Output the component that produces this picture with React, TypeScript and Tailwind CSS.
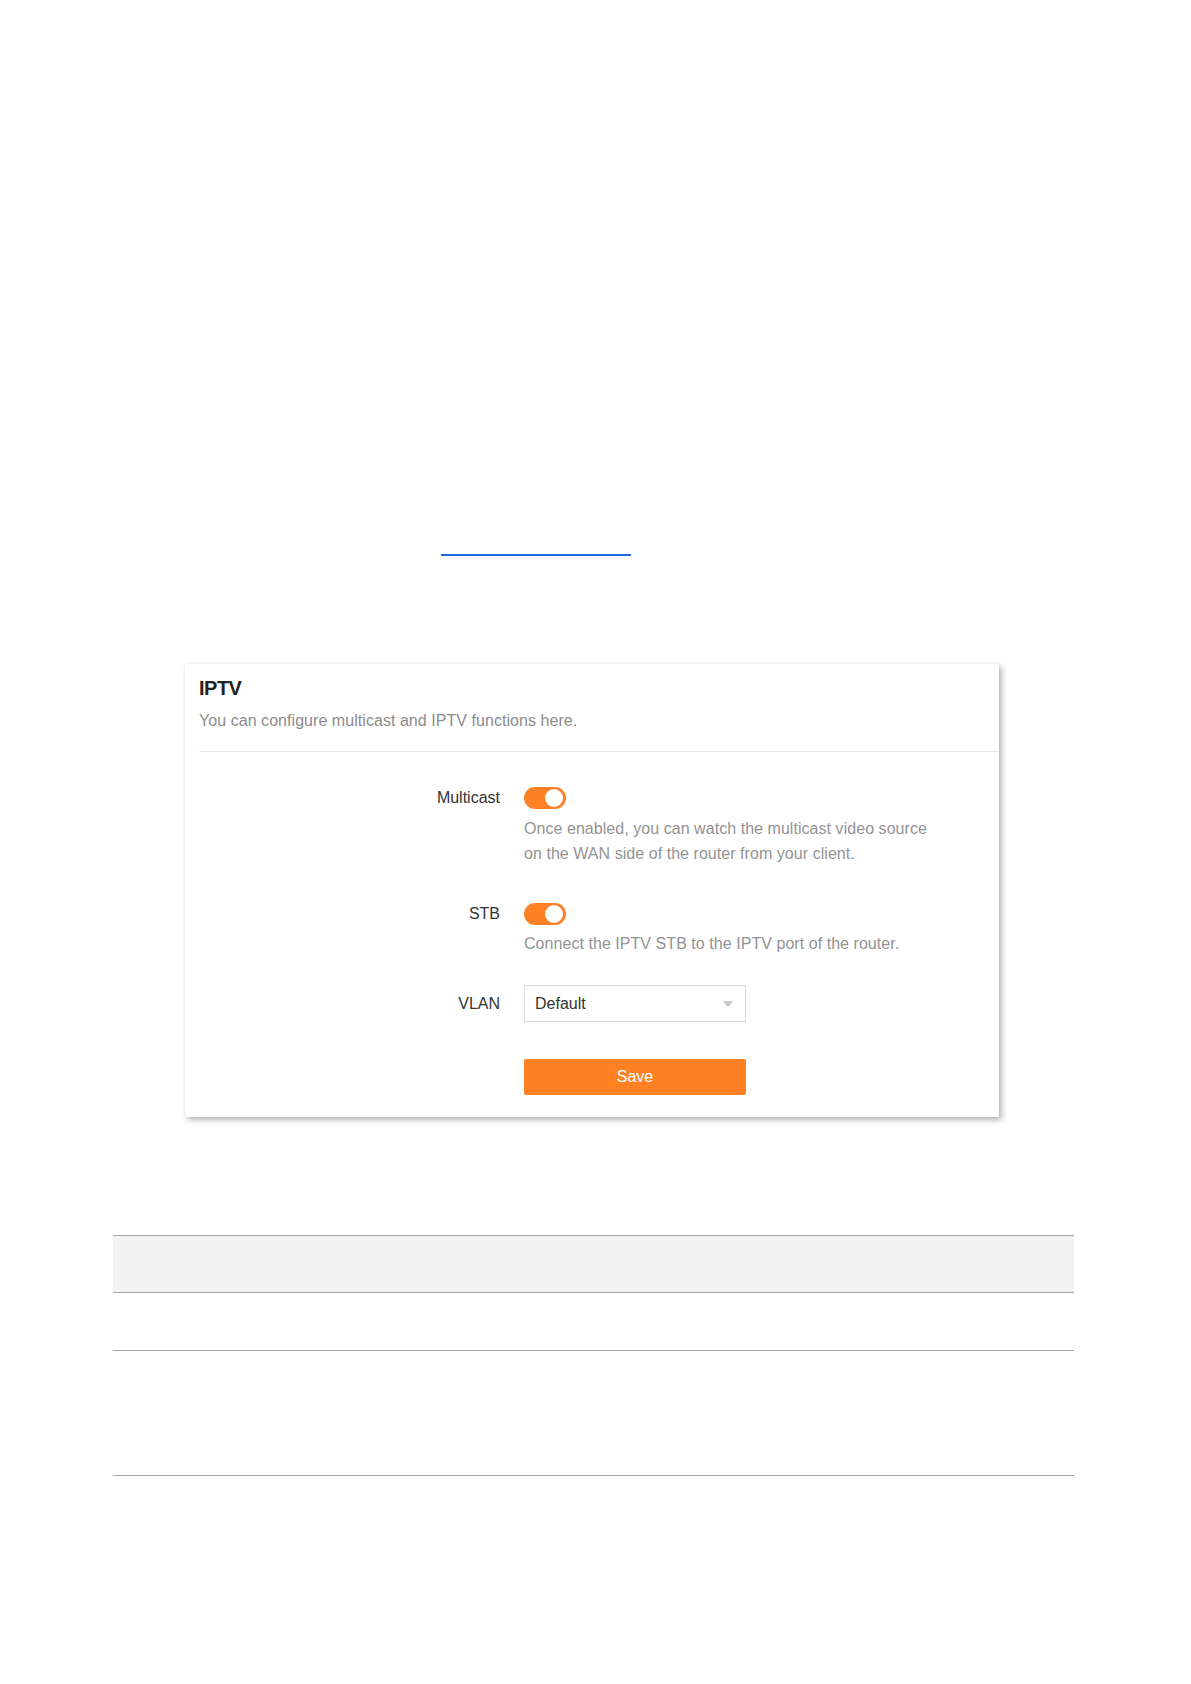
import React from "react";

function Toggle() {
  return (
    <div className="relative h-[22px] w-[42px] rounded-full bg-[#ff8124]">
      <div className="absolute right-[3px] top-[2px] h-[18px] w-[18px] rounded-full bg-white" />
    </div>
  );
}

function Row({ label, children }: { label: string; children: React.ReactNode }) {
  return (
    <div className="flex items-start">
      <div className="w-[315px] shrink-0 text-right text-[16px] leading-[22px] text-[#333]">
        {label}
      </div>
      <div className="ml-[24px] flex flex-col">{children}</div>
    </div>
  );
}

export default function App() {
  return (
    <div
      className="h-[1684px] w-[1191px] bg-white pt-[554px]"
      style={{ fontFamily: '"Liberation Sans", Arial, sans-serif' }}
    >
      <div className="ml-[441px] h-[2px] w-[190px] bg-[#1a6dd6]" />

      <div className="ml-[185px] mt-[108px] h-[453px] w-[814px] bg-white shadow-[3px_3px_6px_rgba(0,0,0,0.28),0_0_3px_rgba(0,0,0,0.08)]">
        <div className="pl-[14px] pt-[12px]">
          <h2 className="text-[20px] font-bold leading-[24px] tracking-[-0.5px] text-[#222]">IPTV</h2>
          <p className="mt-[11px] text-[16px] leading-[20px] tracking-[0.05px] text-[#8c8c8c]">
            You can configure multicast and IPTV functions here.
          </p>
        </div>
        <div className="ml-[14px] mt-[20px] h-px bg-[#e6e6e6]" />

        <div className="mt-[35px] flex flex-col">
          <Row label="Multicast">
            <Toggle />
            <p className="mt-[7px] text-[16px] leading-[25px] tracking-[0.05px] text-[#939393]">
              Once enabled, you can watch the multicast video source
              <br />
              on the WAN side of the router from your client.
            </p>
          </Row>

          <div className="mt-[37px]">
            <Row label="STB">
              <Toggle />
              <p className="mt-[6px] text-[16px] leading-[25px] tracking-[0.05px] text-[#939393]">
                Connect the IPTV STB to the IPTV port of the router.
              </p>
            </Row>
          </div>

          <div className="mt-[29px] flex items-center">
            <div className="w-[315px] shrink-0 text-right text-[16px] leading-[22px] text-[#333]">VLAN</div>
            <div className="ml-[24px] flex h-[37px] w-[222px] items-center justify-between border border-[#dcdcdc] bg-white pl-[10px] pr-[12px]">
              <span className="text-[16px] text-[#333]">Default</span>
              <span className="h-0 w-0 border-x-[5px] border-t-[6px] border-x-transparent border-t-[#c8c8c8]" />
            </div>
          </div>

          <div className="mt-[37px] flex">
            <div className="w-[315px] shrink-0" />
            <button className="ml-[24px] flex h-[36px] w-[222px] items-center justify-center rounded-[2px] bg-[#ff8124] text-[16px] text-white">
              Save
            </button>
          </div>
        </div>
      </div>

      <div className="ml-[113px] mt-[118px] w-[961px]">
        <div className="h-[58px] border-y border-[#a6a6a6] bg-[#f2f2f2]" />
        <div className="h-[58px] border-b border-[#a6a6a6]" />
        <div className="h-[125px] border-b border-[#a6a6a6]" />
      </div>
    </div>
  );
}
